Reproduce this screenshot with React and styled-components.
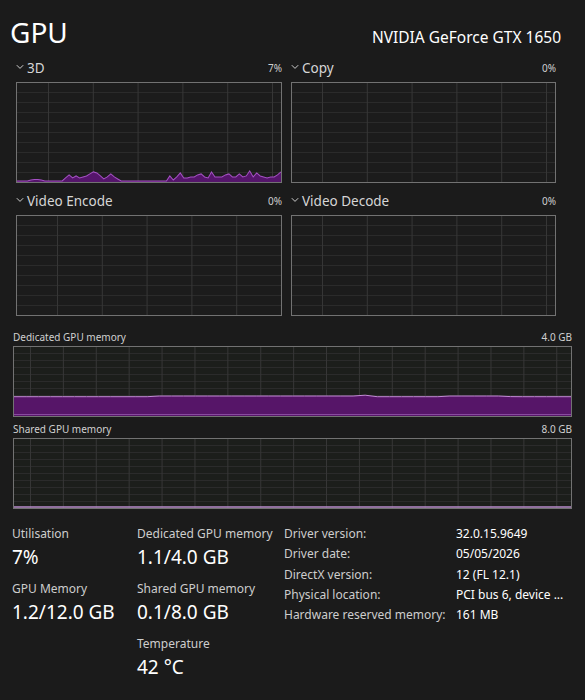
import React from 'react'
import styled, { createGlobalStyle } from 'styled-components'

const GlobalStyle = createGlobalStyle`
    html, body {
        margin: 0;
        padding: 0;
        background: #1b1b1b;
    }
    body {
        font-family: 'Noto Sans', 'Open Sans', sans-serif;
        color: #fff;
    }
`

const Page = styled.div`
    width: 585px;
    height: 700px;
    background: #1b1b1b;
    box-sizing: border-box;
    padding: 14px 24px 0 10px;
    overflow: hidden;
`

const Header = styled.div`
    display: flex;
    justify-content: space-between;
    align-items: baseline;
    height: 42px;
`

const Title = styled.div`
    font-size: 28px;
    line-height: 36px;
    color: #fff;
`

const GpuName = styled.div`
    font-size: 15.5px;
    color: #fff;
`

const EngineGrid = styled.div`
    display: grid;
    grid-template-columns: 266px 265px;
    column-gap: 9px;
    row-gap: 8px;
    margin: 2px 0 0 6px;
`

const Engine = styled.div`
    display: flex;
    flex-direction: column;
`

const EngineHead = styled.div`
    display: flex;
    align-items: center;
    justify-content: space-between;
    height: 20px;
    margin-bottom: 4px;
`

const EngineName = styled.div`
    display: flex;
    align-items: center;
    gap: 3px;
    font-size: 13.5px;
    color: #d6d6d6;
`

const Chevron = styled.svg`
    width: 8px;
    height: 6px;
    margin-top: -3px;
`

const Percent = styled.div`
    font-size: 10px;
    color: #cfcfcf;
`

const Chart = styled.div`
    position: relative;
    height: ${p => p.$h}px;
    border: 1px solid #727272;
    box-sizing: border-box;
    background-color: ${p => p.$tint || '#1c1c1c'};
    background-image:
        linear-gradient(to right, #363636 1px, transparent 1px),
        linear-gradient(to bottom, #2b2b2b 1px, transparent 1px);
    background-size: ${p => p.$vx}px 100%, 100% ${p => p.$hy}px;
    background-position: ${p => p.$off}px 0, 0 ${p => p.$hy - 1}px;
    overflow: hidden;

    svg {
        position: absolute;
        inset: 0;
        width: 100%;
        height: 100%;
        display: block;
    }
`

const MemorySection = styled.div`
    display: flex;
    flex-direction: column;
    margin: 14px -11px 0 3px;
`

const MemHead = styled.div`
    display: flex;
    justify-content: space-between;
    font-size: 10px;
    color: #d0d0d0;
    height: 14px;
    margin-bottom: 2px;
`

const MemBlock = styled.div`
    margin-bottom: 5px;
`

const Stats = styled.div`
    display: grid;
    grid-template-columns: 125px 147px 1fr;
    align-items: start;
    margin: 12px 0 0 2px;
`

const StatCol = styled.div`
    display: flex;
    flex-direction: column;
    gap: 10px;
`

const Stat = styled.div`
    display: flex;
    flex-direction: column;
`

const StatLabel = styled.div`
    font-size: 12px;
    line-height: 16px;
    color: #cdcdcd;
`

const StatValue = styled.div`
    font-size: 19px;
    line-height: 28px;
    margin-top: 1px;
    color: #fff;
`

const InfoTable = styled.div`
    display: grid;
    grid-template-columns: 172px 1fr;
    align-content: start;
    row-gap: 4px;
    font-size: 12px;
    line-height: 16.3px;
`

const InfoKey = styled.div`
    color: #cdcdcd;
`

const InfoVal = styled.div`
    color: #fff;
    white-space: nowrap;
`

const ChevronIcon = () => (
    <Chevron viewBox="0 0 8 6">
        <path d="M0.8 1.2 L4 4.4 L7.2 1.2" fill="none" stroke="#cfcfcf" strokeWidth="1" />
    </Chevron>
)

// deterministic little spikes for the 3D engine
const spikes3d = [
    0, 0, 0, 0, 1, 1.5, 1.5, 1, 0, 0, 0, 0, 0, 0, 3, 6, 3, 5, 3, 4, 5, 7, 9, 8, 5, 2, 4, 7, 4, 2, 0, 0,
    0, 0, 0, 0, 0, 0, 0, 0, 0, 0, 0, 0, 5, 1, 4, 8, 3, 3, 4, 4, 6, 7, 4, 3, 9, 4, 4, 4, 6, 7, 4, 4,
    7, 4, 5, 10, 4, 8, 5, 4, 3, 4, 4, 6, 9
]

const areaPath = (vals, w, h, base) => {
    const step = w / (vals.length - 1)
    let d = `M0 ${h}`
    vals.forEach((v, i) => {
        d += ` L${(i * step).toFixed(1)} ${(h - base - v).toFixed(1)}`
    })
    d += ` L${w} ${h} Z`
    return d
}

const linePath = (vals, w, h, base) => {
    const step = w / (vals.length - 1)
    return vals.map((v, i) => `${i ? 'L' : 'M'}${(i * step).toFixed(1)} ${(h - base - v).toFixed(1)}`).join(' ')
}

const Graph3D = () => {
    const w = 264, h = 98
    return (
        <svg viewBox={`0 0 ${w} ${h}`} preserveAspectRatio="none">
            <path d={areaPath(spikes3d, w, h, 1)} fill="#55156b" />
            <path d={linePath(spikes3d, w, h, 1)} fill="none" stroke="#a550c4" strokeWidth="1" />
        </svg>
    )
}

const dedicated = [
    19.3, 19.3, 19.3, 19.3, 19.3, 19.3, 19.3, 19.3, 19.3, 19.3, 19.3, 19.3, 20, 20, 20, 20, 20, 20, 20, 20,
    20, 20, 20, 20, 20, 20, 20, 20, 20, 20.8, 19.3, 19.3, 19.3, 19.3, 19.3, 19.3, 20, 20, 20, 20, 20, 19.4,
    19.3, 19.3, 19.3, 19.3, 19.3
]

const GraphDedicated = () => {
    const w = 558, h = 69
    return (
        <svg viewBox={`0 0 ${w} ${h}`} preserveAspectRatio="none">
            <path d={areaPath(dedicated, w, h, 0)} fill="#561568" />
            <path d={linePath(dedicated, w, h, 0)} fill="none" stroke="#c48bd6" strokeWidth="1" />
            <line x1="0" y1={h - 1.5} x2={w} y2={h - 1.5} stroke="#8a4aa0" strokeWidth="1" />
        </svg>
    )
}

const GraphShared = () => {
    const w = 558, h = 69
    return (
        <svg viewBox={`0 0 ${w} ${h}`} preserveAspectRatio="none">
            <line x1="0" y1={h - 1} x2={w} y2={h - 1} stroke="#b88ccc" strokeWidth="1.5" />
        </svg>
    )
}

const engines = [
    { name: '3D', pct: '7%', off: 31, graph: <Graph3D /> },
    { name: 'Copy', pct: '0%', off: 30 },
    { name: 'Video Encode', pct: '0%', off: 40 },
    { name: 'Video Decode', pct: '0%', off: 30 },
]

const info = [
    ['Driver version:', '32.0.15.9649'],
    ['Driver date:', '05/05/2026'],
    ['DirectX version:', '12 (FL 12.1)'],
    ['Physical location:', 'PCI bus 6, device ...'],
    ['Hardware reserved memory:', '161 MB'],
]

const App = () => {
    return (
        <Page>
            <GlobalStyle />
            <Header>
                <Title>GPU</Title>
                <GpuName>NVIDIA GeForce GTX 1650</GpuName>
            </Header>

            <EngineGrid>
                {engines.map(e => (
                    <Engine key={e.name}>
                        <EngineHead>
                            <EngineName>
                                <ChevronIcon />
                                {e.name}
                            </EngineName>
                            <Percent>{e.pct}</Percent>
                        </EngineHead>
                        <Chart $h={101} $vx={44.8} $hy={10} $off={e.off}>
                            {e.graph}
                        </Chart>
                    </Engine>
                ))}
            </EngineGrid>

            <MemorySection>
                <MemBlock>
                    <MemHead>
                        <span>Dedicated GPU memory</span>
                        <span>4.0 GB</span>
                    </MemHead>
                    <Chart $h={71} $vx={32.9} $hy={7} $off={16} $tint="#1c1e1b">
                        <GraphDedicated />
                    </Chart>
                </MemBlock>
                <MemBlock>
                    <MemHead>
                        <span>Shared GPU memory</span>
                        <span>8.0 GB</span>
                    </MemHead>
                    <Chart $h={71} $vx={32.9} $hy={7} $off={16} $tint="#1c1e1b">
                        <GraphShared />
                    </Chart>
                </MemBlock>
            </MemorySection>

            <Stats>
                <StatCol>
                    <Stat>
                        <StatLabel>Utilisation</StatLabel>
                        <StatValue>7%</StatValue>
                    </Stat>
                    <Stat>
                        <StatLabel>GPU Memory</StatLabel>
                        <StatValue>1.2/12.0 GB</StatValue>
                    </Stat>
                </StatCol>
                <StatCol>
                    <Stat>
                        <StatLabel>Dedicated GPU memory</StatLabel>
                        <StatValue>1.1/4.0 GB</StatValue>
                    </Stat>
                    <Stat>
                        <StatLabel>Shared GPU memory</StatLabel>
                        <StatValue>0.1/8.0 GB</StatValue>
                    </Stat>
                    <Stat>
                        <StatLabel>Temperature</StatLabel>
                        <StatValue>42 °C</StatValue>
                    </Stat>
                </StatCol>
                <InfoTable>
                    {info.map(([k, v]) => (
                        <React.Fragment key={k}>
                            <InfoKey>{k}</InfoKey>
                            <InfoVal>{v}</InfoVal>
                        </React.Fragment>
                    ))}
                </InfoTable>
            </Stats>
        </Page>
    )
}

export default App
